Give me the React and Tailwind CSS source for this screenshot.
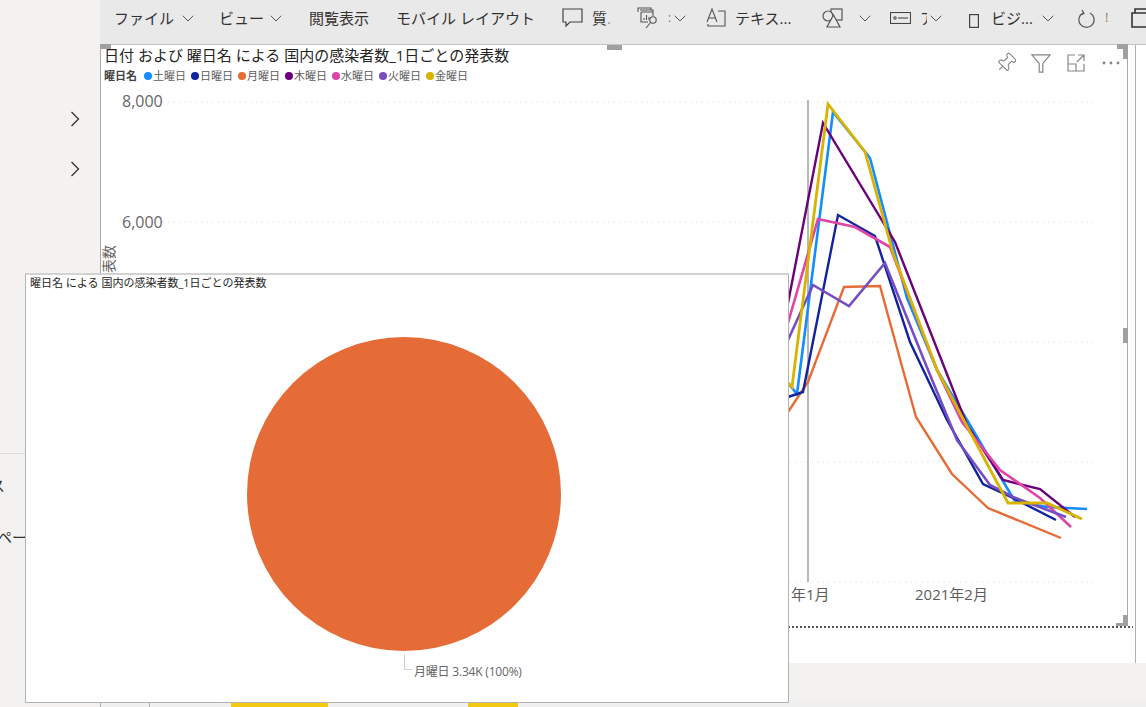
import { Pin } from 'lucide-react';

const legend = [
  { name: '土曜日', color: 'bg-[#118dff]' },
  { name: '日曜日', color: 'bg-[#12239e]' },
  { name: '月曜日', color: 'bg-[#e66c37]' },
  { name: '木曜日', color: 'bg-[#6b007b]' },
  { name: '水曜日', color: 'bg-[#e044a7]' },
  { name: '火曜日', color: 'bg-[#744ec2]' },
  { name: '金曜日', color: 'bg-[#d9b300]' },
];

// page coordinates, read off the reference
const series = [
  { color: '#e66c37', width: 2.4, points: '788,412 808,382 844,287 880,286 903,370 916,417 952,474 988,508 1061,538' },
  { color: '#118dff', width: 2.6, points: '788,383 797,394 833,112 870,158 907,298 937,370 970,425 1010,493 1015,501 1047,507 1087,509' },
  { color: '#6b007b', width: 2.4, points: '788,303 823,123 895,242 967,425 1003,480 1040,489 1075,517' },
  { color: '#12239e', width: 2.4, points: '788,397 803,392 838,215 875,236 910,342 947,420 983,484 1013,498 1056,520' },
  { color: '#e044a7', width: 2.6, points: '788,323 818,219 855,227 890,247 937,370 962,422 1000,470 1040,498 1071,527' },
  { color: '#744ec2', width: 2.6, points: '788,340 813,285 849,306 885,263 928,370 957,440 990,485 1013,497 1066,517' },
  { color: '#d9b300', width: 2.8, points: '788,383 792,387 828,104 865,152 893,253 937,370 1008,503 1047,503 1082,519' },
];

const gridY = [102, 222, 342, 462, 582];

const Chevron = ({ className = '' }) => (
  <svg width="12" height="7" viewBox="0 0 12 7" fill="none" stroke="#555" strokeWidth="1" className={className}>
    <path d="M0.7 0.7L6 6l5.3-5.3" />
  </svg>
);

const SideChevron = ({ className = '' }) => (
  <svg width="10" height="16" viewBox="0 0 10 16" fill="none" stroke="#333" strokeWidth="1.3" className={className}>
    <path d="M1.5 1l7 7-7 7" />
  </svg>
);

const Toolbar = () => (
  <div className="h-[45px] shrink-0 flex items-center bg-[#e9e9e9] border-b border-[#c4c4c4] pl-[14px] pb-[8px] text-[15px] text-[#323130] whitespace-nowrap overflow-hidden [&>*]:shrink-0">
    <span className="w-[60px]">ファイル</span>
    <Chevron className="ml-[8px]" />
    <span className="ml-[25px] w-[46px]">ビュー</span>
    <Chevron className="ml-[5px]" />
    <span className="ml-[27px] w-[60px]">閲覧表示</span>
    <span className="ml-[27px] w-[141px]">モバイル レイアウト</span>

    {/* comment */}
    <svg width="22" height="20" viewBox="0 0 22 20" fill="none" stroke="#444" strokeWidth="1.2" className="ml-[25px]">
      <path d="M1 1h19v13H8l-4 4v-4H1z" />
    </svg>
    <span className="ml-[8px] w-[20px]">質<span className="text-[#999]">.</span></span>

    {/* report search */}
    <svg width="22" height="22" viewBox="0 0 22 22" fill="none" stroke="#555" strokeWidth="1.1" className="ml-[25px]">
      <path d="M1 5V1h13v2M3 3h13v2M4 5h12v4M4 5v10h7" />
      <path d="M7 13v-2M9.5 13V8M12 13v-3" />
      <circle cx="16" cy="13" r="3.2" />
      <path d="M13.6 15.5L9 21" />
    </svg>
    <span className="ml-[9px] w-[6px] text-[12px] text-[#8a6d3b]">:</span>
    <Chevron />

    {/* text box */}
    <svg width="20" height="20" viewBox="0 0 20 20" fill="none" stroke="#555" strokeWidth="1.1" className="ml-[20px]">
      <path d="M1 14L6 1l5 13M3 10h6" />
      <path d="M12 3h7v15H2v-2" />
    </svg>
    <span className="ml-[9px] w-[56px]">テキス...</span>

    {/* shapes */}
    <svg width="22" height="20" viewBox="0 0 22 20" fill="none" stroke="#555" strokeWidth="1.2" className="ml-[31px]">
      <rect x="9" y="1" width="11" height="11" />
      <circle cx="6" cy="8" r="5" fill="#e9e9e9" />
      <path d="M11.5 7L18 19H5z" fill="#e9e9e9" />
    </svg>
    <Chevron className="ml-[15px]" />

    {/* button */}
    <svg width="21" height="12" viewBox="0 0 21 12" fill="none" stroke="#444" strokeWidth="1.1" className="ml-[19px]">
      <rect x="0.5" y="0.5" width="20" height="11" />
      <path d="M8 6h10" />
      <circle cx="5" cy="6" r="1.2" />
    </svg>
    <span className="ml-[9px] w-[7px] overflow-hidden">ア</span>
    <Chevron className="ml-[3px]" />

    {/* phone */}
    <svg width="10" height="14" viewBox="0 0 10 14" fill="none" stroke="#444" strokeWidth="1.2" className="ml-[27px] mt-[6px]">
      <rect x="0.6" y="0.6" width="8.8" height="12.8" />
    </svg>
    <span className="ml-[12px] w-[39px]">ビジ...</span>
    <Chevron className="ml-[12px]" />

    {/* refresh */}
    <svg width="18" height="19" viewBox="0 0 18 19" fill="none" stroke="#555" strokeWidth="1.2" className="ml-[24px]">
      <path d="M5 4a7.6 7.6 0 1 0 7 0" />
      <path d="M4 1l2 3.5L2.5 6" />
    </svg>
    <span className="ml-[9px] w-[5px] text-[13px] text-[#9a8060]">!</span>

    {/* page copy, cut off by the window */}
    <svg width="18" height="20" viewBox="0 0 18 20" fill="none" stroke="#333" strokeWidth="1.6" className="ml-[21px]">
      <path d="M1 5h17v14H1zM4 5V1h14" />
    </svg>
  </div>
);

const VisualActions = () => (
  <div className="absolute right-[7px] top-[7px] flex items-center text-[#858585]">
    <Pin size={22} strokeWidth={1.2} className="rotate-45" />
    <svg width="20" height="19" viewBox="0 0 20 19" fill="none" stroke="currentColor" strokeWidth="1.2" className="ml-[14px]">
      <path d="M0.8 0.8h18.4l-7.4 8.6v8.8H8.2V9.4z" />
    </svg>
    <svg width="18" height="18" viewBox="0 0 18 18" fill="none" stroke="currentColor" strokeWidth="1.2" className="ml-[16px]">
      <path d="M8 1H1v16h16v-7M1 10h8v7M11 1h6v6M17 1l-7 7" />
    </svg>
    <svg width="18" height="4" viewBox="0 0 18 4" fill="currentColor" className="ml-[17px]">
      <circle cx="2" cy="2" r="1.4" />
      <circle cx="9" cy="2" r="1.4" />
      <circle cx="16" cy="2" r="1.4" />
    </svg>
  </div>
);

const LineChart = () => (
  <svg width="1026" height="581" viewBox="101 45 1026 581" className="absolute left-0 top-0">
    {gridY.map((y) => (
      <line key={y} x1="157" x2="1094" y1={y} y2={y} stroke="#e3e3e3" strokeWidth="1" strokeDasharray="1.5 4" />
    ))}
    <text x="122" y="107" fontSize="16" fill="#666">8,000</text>
    <text x="122" y="228" fontSize="16" fill="#666">6,000</text>
    <text x="791" y="600" fontSize="15" fill="#605e5c">年1月</text>
    <text x="915" y="600" fontSize="15" fill="#605e5c">2021年2月</text>
    <text transform="translate(114 287) rotate(-90)" fontSize="14" fill="#605e5c">発表数</text>
    <line x1="808" x2="808" y1="100" y2="582" stroke="#b8b8b8" strokeWidth="2" />
    {series.map((s) => (
      <polyline key={s.color} points={s.points} fill="none" stroke={s.color} strokeWidth={s.width} strokeLinejoin="miter" />
    ))}
  </svg>
);

const ChartFrame = () => (
  <div className="relative w-[1028px] h-[581px] border-x border-[#a8a8a8]">
    <LineChart />
    <VisualActions />
    {/* selection handles */}
    <span className="absolute -left-px -top-[1px] w-[11px] h-[5px] bg-[#a0a0a0]" />
    <span className="absolute left-[506px] top-0 w-[15px] h-[5px] bg-[#a0a0a0]" />
    <span className="absolute -right-px -top-[1px] w-[11px] h-[5px] bg-[#a0a0a0]" />
    <span className="absolute -right-px -top-[1px] w-[5px] h-[15px] bg-[#a0a0a0]" />
    <span className="absolute -right-px top-[283px] w-[5px] h-[15px] bg-[#a0a0a0]" />
    <span className="absolute -right-px bottom-0 w-[5px] h-[11px] bg-[#a0a0a0]" />
    <span className="absolute -right-px bottom-0 w-[12px] h-[3px] bg-[#a0a0a0]" />

    <div className="relative pl-[3px]">
      <h2 className="text-[15px] leading-[20px] font-normal text-[#252423] whitespace-nowrap">
        日付 および 曜日名 による 国内の感染者数_1日ごとの発表数
      </h2>
      <div className="mt-[3px] flex items-center text-[11px] leading-[16px] text-[#605e5c] whitespace-nowrap">
        <span className="font-bold text-[#444] w-[40px]">曜日名</span>
        {legend.map((item) => (
          <span key={item.name} className="flex items-center w-[47px]">
            <span className={`w-[8px] h-[8px] rounded-full mr-px ${item.color}`} />
            {item.name}
          </span>
        ))}
      </div>
    </div>
  </div>
);

const PieWindow = () => (
  <div className="absolute left-[25px] top-[273px] w-[764px] h-[430px] bg-white border border-[#b3b3b3] border-t-2 border-t-[#d2d2d2]">
    <p className="pl-[4px] text-[11px] leading-[15px] text-[#252423] whitespace-nowrap">
      曜日名 による 国内の感染者数_1日ごとの発表数
    </p>
    <div className="mt-[47px] ml-[221px] w-[314px] h-[314px] rounded-full bg-[#e66c37]" />
    <div className="mt-[3px] ml-[378px] flex items-end">
      <span className="w-[8px] h-[16px] border-l border-b border-[#d0d0d0]" />
      <span className="ml-[2px] -mb-[10px] text-[12px] leading-[16px] tracking-[-0.2px] text-[#666] whitespace-nowrap">月曜日 3.34K (100%)</span>
    </div>
  </div>
);

export default function App() {
  return (
    <div className="relative w-[1146px] h-[707px] overflow-hidden flex bg-[#f3f2f1] font-['Open_Sans','Noto_Sans_CJK_JP',sans-serif]">
      <aside className="w-[100px] shrink-0 flex flex-col pt-[111px] text-[#333] overflow-hidden">
        <SideChevron className="ml-[70px]" />
        <SideChevron className="ml-[70px] mt-[34px]" />
        <div className="mt-[276px] w-[25px] border-t border-[#dcdcdc]" />
        <span className="mt-[21px] -ml-[10px] text-[15px] leading-[20px]">ス</span>
        <span className="mt-[32px] -ml-[3px] text-[15px] leading-[20px] whitespace-nowrap">ペー</span>
      </aside>

      <main className="flex-1 flex flex-col min-w-0">
        <Toolbar />
        <div className="h-[618px] shrink-0 bg-white">
          <div className="w-[1036px] h-full border-r border-[#b0b0b0]">
            <ChartFrame />
            <div className="w-[1033px] h-[2px] bg-[repeating-linear-gradient(90deg,#555_0_2px,transparent_2px_4px)]" />
          </div>
        </div>
        <div className="flex-1 flex items-end">
          <div className="h-[5px] w-full flex bg-[#f0f0f0]">
            <span className="w-[50px] border-x border-[#b0b0b0]" />
            <span className="ml-[81px] w-[97px] bg-[#f2c811]" />
            <span className="ml-[140px] w-[50px] bg-[#f2c811]" />
          </div>
        </div>
      </main>

      <PieWindow />
    </div>
  );
}
